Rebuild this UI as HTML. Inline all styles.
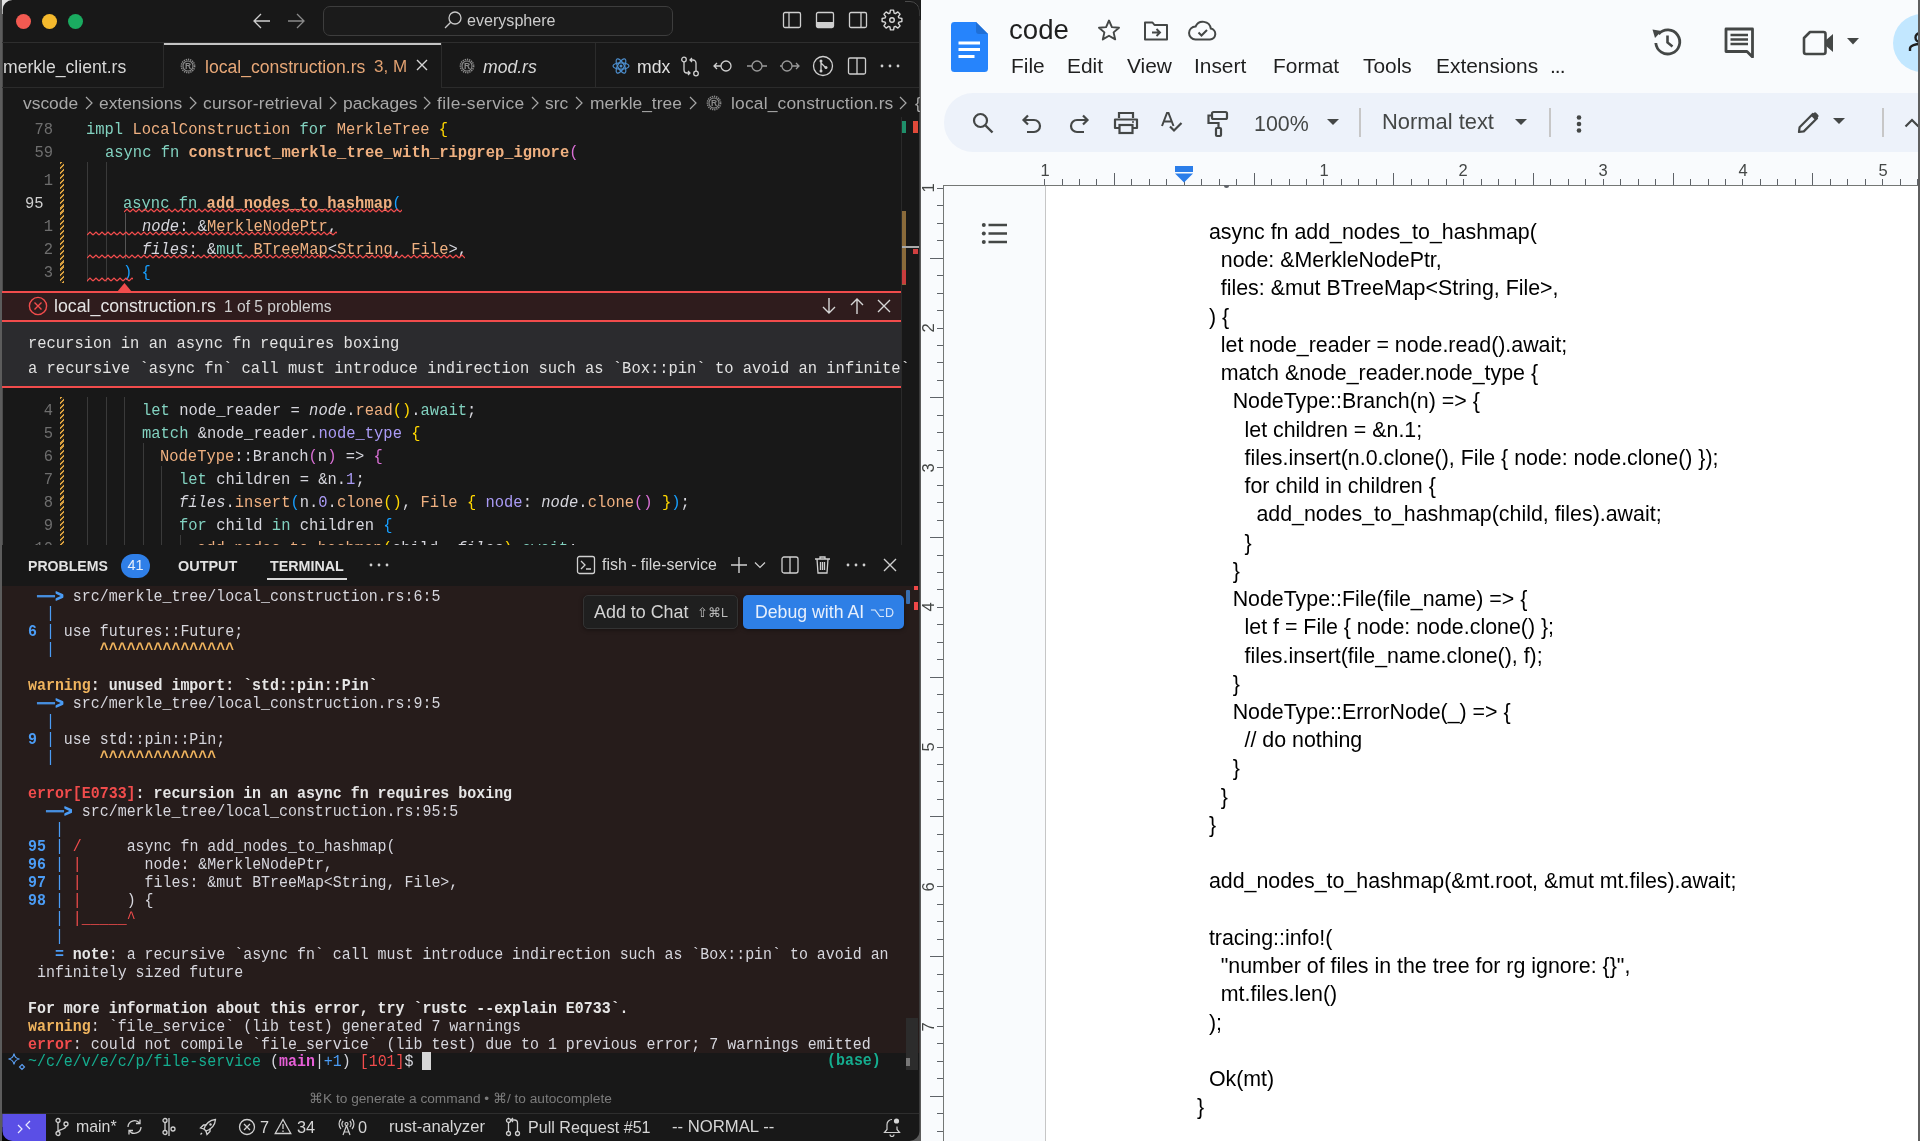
<!DOCTYPE html><html><head><meta charset='utf-8'><style>
*{box-sizing:border-box}
html,body{margin:0;padding:0}
body{width:1920px;height:1141px;position:relative;overflow:hidden;background:#f9fbfd;font-family:"Liberation Sans",sans-serif}
.a{position:absolute;will-change:transform}
.pre{white-space:pre}
.m{font-family:"Liberation Mono",monospace}
.s{font-family:"Liberation Sans",sans-serif}
</style></head><body><div class="a" style="left:0;top:0;width:921px;height:1141px;background:#5c5c5c"></div><div class="a" style="left:900px;top:0;width:21px;height:20px;background:#1c1c1c"></div><div class="a" style="left:2px;top:0;width:14px;height:14px;background:#e2e2e2"></div><div class="a" style="left:2px;top:1127px;width:14px;height:14px;background:#050505"></div><div id="vs" class="a" style="left:0;top:0;width:919.5px;height:1141px;background:#181818;clip-path:inset(0 0 0 2.5px round 10px);overflow:hidden"><div class="a" style="left:918.5px;top:0;width:1px;height:1141px;background:#2c2c2c"></div><div class="a" style="left:889.5px;top:0.5px;width:30px;height:30px;border:1px solid #4a4a4a;border-radius:10px;clip-path:inset(0 0 15px 15px)"></div><div class="a" style="left:16.3px;top:13.8px;width:15.4px;height:15.4px;border-radius:50%;background:#f25a51"></div><div class="a" style="left:41.8px;top:13.8px;width:15.4px;height:15.4px;border-radius:50%;background:#f4b92d"></div><div class="a" style="left:67.6px;top:13.8px;width:15.4px;height:15.4px;border-radius:50%;background:#1aab60"></div><svg class="a" style="left:252px;top:12px" width="20" height="18" viewBox="0 0 20 18"><path d="M18 9H3M9 2L2 9l7 7" fill="none" stroke="#cfcfcf" stroke-width="1.3"/></svg><svg class="a" style="left:286px;top:12px" width="20" height="18" viewBox="0 0 20 18"><path d="M2 9h15M11 2l7 7-7 7" fill="none" stroke="#8a8a8a" stroke-width="1.3"/></svg><div class="a" style="left:322.5px;top:5.5px;width:350px;height:30px;border:1px solid #3d3d3d;border-radius:7px;background:#1b1b1b"></div><svg class="a" style="left:443px;top:10px" width="20" height="20" viewBox="0 0 20 20"><circle cx="12" cy="8" r="6" fill="none" stroke="#c8c8c8" stroke-width="1.3"/><path d="M7.7 12.3L2 18" stroke="#c8c8c8" stroke-width="1.3"/></svg><div class="a pre s" style="left:467px;top:9px;font-size:16.1px;line-height:22px;color:#cccccc">everysphere</div><svg class="a" style="left:782px;top:10px" width="20" height="20" viewBox="0 0 20 20"><rect x="1.5" y="2.5" width="17" height="15" rx="1.5" fill="none" stroke="#cfcfcf" stroke-width="1.3"/><path d="M7 2.5v15" stroke="#cfcfcf" stroke-width="1.3"/></svg><svg class="a" style="left:815px;top:10px" width="20" height="20" viewBox="0 0 20 20"><rect x="1.5" y="2.5" width="17" height="15" rx="1.5" fill="none" stroke="#cfcfcf" stroke-width="1.3"/><rect x="2" y="12" width="16" height="5" fill="#cfcfcf"/></svg><svg class="a" style="left:848px;top:10px" width="20" height="20" viewBox="0 0 20 20"><rect x="1.5" y="2.5" width="17" height="15" rx="1.5" fill="none" stroke="#cfcfcf" stroke-width="1.3"/><path d="M13 2.5v15" stroke="#cfcfcf" stroke-width="1.3"/></svg><svg class="a" style="left:881px;top:9px" width="22" height="22" viewBox="0 0 22 22"><polygon points="8.89,4.11 9.44,1.12 12.56,1.12 13.11,4.11 14.38,4.64 16.88,2.91 19.09,5.12 17.36,7.62 17.89,8.89 20.88,9.44 20.88,12.56 17.89,13.11 17.36,14.38 19.09,16.88 16.88,19.09 14.38,17.36 13.11,17.89 12.56,20.88 9.44,20.88 8.89,17.89 7.62,17.36 5.12,19.09 2.91,16.88 4.64,14.38 4.11,13.11 1.12,12.56 1.12,9.44 4.11,8.89 4.64,7.62 2.91,5.12 5.12,2.91 7.62,4.64" fill="none" stroke="#d6d6d6" stroke-width="1.4" stroke-linejoin="round"/><circle cx="11" cy="11" r="2.3" fill="none" stroke="#d6d6d6" stroke-width="1.4"/></svg><div class="a" style="left:0;top:42px;width:919px;height:1px;background:#2e2e2e"></div><div class="a" style="left:0;top:87px;width:919px;height:1px;background:#2b2b2b"></div><div class="a" style="left:163px;top:43px;width:1px;height:44px;background:#2b2b2b"></div><div class="a pre s" style="left:3px;top:55px;font-size:17.6px;line-height:24px;color:#d8d8d8">merkle_client.rs</div><div class="a" style="left:164px;top:43px;width:277px;height:45px;background:#181818"></div><div class="a" style="left:164px;top:43px;width:277px;height:2px;background:#c4c4c4"></div><svg class="a" style="left:180px;top:58px" width="16" height="16" viewBox="0 0 16 16"><circle cx="8" cy="8" r="6.6" fill="none" stroke="#8c8c8c" stroke-width="1.6" stroke-dasharray="1.3 0.9"/><circle cx="8" cy="8" r="5" fill="none" stroke="#8c8c8c" stroke-width="1.1"/><text x="8" y="11.2" text-anchor="middle" font-family="Liberation Sans" font-weight="bold" font-size="8.5" fill="#8c8c8c">R</text></svg><div class="a pre s" style="left:205px;top:55px;font-size:17.6px;line-height:24px;color:#e8a878">local_construction.rs</div><div class="a pre s" style="left:374px;top:55px;font-size:17px;line-height:24px;color:#e0a070">3, M</div><svg class="a" style="left:415px;top:58px" width="14" height="14" viewBox="0 0 14 14"><path d="M2 2l10 10M12 2L2 12" stroke="#d6d6d6" stroke-width="1.4"/></svg><div class="a" style="left:441px;top:43px;width:1px;height:44px;background:#2b2b2b"></div><svg class="a" style="left:459px;top:58px" width="16" height="16" viewBox="0 0 16 16"><circle cx="8" cy="8" r="6.6" fill="none" stroke="#8c8c8c" stroke-width="1.6" stroke-dasharray="1.3 0.9"/><circle cx="8" cy="8" r="5" fill="none" stroke="#8c8c8c" stroke-width="1.1"/><text x="8" y="11.2" text-anchor="middle" font-family="Liberation Sans" font-weight="bold" font-size="8.5" fill="#8c8c8c">R</text></svg><div class="a pre s" style="left:483px;top:55px;font-size:17.6px;line-height:24px;color:#d8d8d8;font-style:italic">mod.rs</div><div class="a" style="left:595px;top:43px;width:1px;height:44px;background:#2b2b2b"></div><svg class="a" style="left:612px;top:57px" width="18" height="18" viewBox="0 0 18 18"><g fill="none" stroke="#4d8fcf" stroke-width="1.2"><ellipse cx="9" cy="9" rx="8" ry="3.2"/><ellipse cx="9" cy="9" rx="8" ry="3.2" transform="rotate(60 9 9)"/><ellipse cx="9" cy="9" rx="8" ry="3.2" transform="rotate(120 9 9)"/></g><circle cx="9" cy="9" r="1.5" fill="#4d8fcf"/></svg><div class="a pre s" style="left:637px;top:55px;font-size:17.6px;line-height:24px;color:#e0e0e0">mdx</div><svg class="a" style="left:680px;top:56px" width="20" height="21" viewBox="0 0 20 21"><g fill="none" stroke="#cfcfcf" stroke-width="1.3"><circle cx="4" cy="3.5" r="2.3"/><circle cx="16" cy="17.5" r="2.3"/><path d="M4 5.8V14a3 3 0 0 0 3 3h3M8 15l2 2-2 2"/><path d="M16 15.2V7a3 3 0 0 0-3-3h-3M12 2l-2 2 2 2"/></g></svg><svg class="a" style="left:712px;top:56px" width="22" height="20" viewBox="0 0 22 20"><g fill="none" stroke="#cfcfcf" stroke-width="1.3"><circle cx="14" cy="10" r="5"/><path d="M9 10H2M5 7l-3 3 3 3"/></g></svg><svg class="a" style="left:746px;top:56px" width="22" height="20" viewBox="0 0 22 20"><g fill="none" stroke="#9a9a9a" stroke-width="1.3"><circle cx="11" cy="10" r="5"/><path d="M6 10H1M16 10h5"/></g></svg><svg class="a" style="left:779px;top:56px" width="22" height="20" viewBox="0 0 22 20"><g fill="none" stroke="#9a9a9a" stroke-width="1.3"><circle cx="8" cy="10" r="5"/><path d="M13 10h7M17 7l3 3-3 3M3 10H1"/></g></svg><svg class="a" style="left:812px;top:55px" width="22" height="22" viewBox="0 0 22 22"><g fill="none" stroke="#cfcfcf" stroke-width="1.3"><circle cx="11" cy="11" r="9.5"/><path d="M9 5v12M9 8l5 5"/></g><circle cx="9" cy="6" r="1.5" fill="#cfcfcf"/><circle cx="9" cy="16" r="1.5" fill="#cfcfcf"/><circle cx="14" cy="12.5" r="1.5" fill="#cfcfcf"/></svg><svg class="a" style="left:847px;top:56px" width="20" height="20" viewBox="0 0 20 20"><g fill="none" stroke="#cfcfcf" stroke-width="1.3"><rect x="1.5" y="2" width="17" height="16" rx="1.5"/><path d="M10 2v16"/></g></svg><svg class="a" style="left:879px;top:62px" width="22" height="8" viewBox="0 0 22 8"><circle cx="3" cy="4" r="1.4" fill="#cfcfcf"/><circle cx="11" cy="4" r="1.4" fill="#cfcfcf"/><circle cx="19" cy="4" r="1.4" fill="#cfcfcf"/></svg><div class="a pre s" style="left:23px;top:91px;font-size:17.4px;line-height:24px;letter-spacing:0px;color:#a8a8a8">vscode</div><div class="a pre s" style="left:99px;top:91px;font-size:17.4px;line-height:24px;letter-spacing:0px;color:#a8a8a8">extensions</div><div class="a pre s" style="left:203.3px;top:91px;font-size:17.4px;line-height:24px;letter-spacing:0.22px;color:#a8a8a8">cursor-retrieval</div><div class="a pre s" style="left:343px;top:91px;font-size:17.4px;line-height:24px;letter-spacing:0px;color:#a8a8a8">packages</div><div class="a pre s" style="left:437px;top:91px;font-size:17.4px;line-height:24px;letter-spacing:0.37px;color:#a8a8a8">file-service</div><div class="a pre s" style="left:545px;top:91px;font-size:17.4px;line-height:24px;letter-spacing:0px;color:#a8a8a8">src</div><div class="a pre s" style="left:589.6px;top:91px;font-size:17.4px;line-height:24px;letter-spacing:0px;color:#a8a8a8">merkle_tree</div><div class="a pre s" style="left:730.6px;top:91px;font-size:17.4px;line-height:24px;letter-spacing:0.19px;color:#a8a8a8">local_construction.rs</div><svg class="a" style="left:85px;top:96px" width="8" height="14" viewBox="0 0 8 14"><path d="M1 1l6 6-6 6" fill="none" stroke="#a8a8a8" stroke-width="1.2"/></svg><svg class="a" style="left:189px;top:96px" width="8" height="14" viewBox="0 0 8 14"><path d="M1 1l6 6-6 6" fill="none" stroke="#a8a8a8" stroke-width="1.2"/></svg><svg class="a" style="left:329px;top:96px" width="8" height="14" viewBox="0 0 8 14"><path d="M1 1l6 6-6 6" fill="none" stroke="#a8a8a8" stroke-width="1.2"/></svg><svg class="a" style="left:423px;top:96px" width="8" height="14" viewBox="0 0 8 14"><path d="M1 1l6 6-6 6" fill="none" stroke="#a8a8a8" stroke-width="1.2"/></svg><svg class="a" style="left:530.7px;top:96px" width="8" height="14" viewBox="0 0 8 14"><path d="M1 1l6 6-6 6" fill="none" stroke="#a8a8a8" stroke-width="1.2"/></svg><svg class="a" style="left:575px;top:96px" width="8" height="14" viewBox="0 0 8 14"><path d="M1 1l6 6-6 6" fill="none" stroke="#a8a8a8" stroke-width="1.2"/></svg><svg class="a" style="left:688.5px;top:96px" width="8" height="14" viewBox="0 0 8 14"><path d="M1 1l6 6-6 6" fill="none" stroke="#a8a8a8" stroke-width="1.2"/></svg><svg class="a" style="left:898.5px;top:96px" width="8" height="14" viewBox="0 0 8 14"><path d="M1 1l6 6-6 6" fill="none" stroke="#a8a8a8" stroke-width="1.2"/></svg><svg class="a" style="left:706px;top:95px" width="16" height="16" viewBox="0 0 16 16"><circle cx="8" cy="8" r="6.6" fill="none" stroke="#8a8a8a" stroke-width="1.6" stroke-dasharray="1.3 0.9"/><circle cx="8" cy="8" r="5" fill="none" stroke="#8a8a8a" stroke-width="1.1"/><text x="8" y="11.2" text-anchor="middle" font-family="Liberation Sans" font-weight="bold" font-size="8.5" fill="#8a8a8a">R</text></svg><div class="a pre s" style="left:915px;top:91px;font-size:17.4px;line-height:24px;color:#a8a8a8">{</div><div class="a pre m" style="transform-origin:0 15px;transform:translateY(1px) scaleY(1.08);left:0;top:116px;width:53px;text-align:right;margin-top:2px;font-size:15.47px;line-height:23px;color:#6e6e6e">78</div><div class="a pre m" style="transform-origin:0 15px;transform:translateY(1px) scaleY(1.08);left:86.00px;top:118px;font-size:15.47px;line-height:23px;color:#d6d6dd"><span style="color:#82d2c0">impl</span><span style="color:#d6d6dd"> </span><span style="color:#efb080">LocalConstruction</span><span style="color:#d6d6dd"> </span><span style="color:#82d2c0">for</span><span style="color:#d6d6dd"> </span><span style="color:#efb080">MerkleTree</span><span style="color:#d6d6dd"> </span><span style="color:#ffd700">{</span></div><div class="a pre m" style="transform-origin:0 15px;transform:translateY(1px) scaleY(1.08);left:0;top:139px;width:53px;text-align:right;margin-top:2px;font-size:15.47px;line-height:23px;color:#6e6e6e">59</div><div class="a pre m" style="transform-origin:0 15px;transform:translateY(1px) scaleY(1.08);left:104.56px;top:141px;font-size:15.47px;line-height:23px;color:#d6d6dd"><span style="color:#82d2c0">async</span><span style="color:#d6d6dd"> </span><span style="color:#82d2c0">fn</span><span style="color:#d6d6dd"> </span><span style="color:#efb080;font-weight:bold">construct_merkle_tree_with_ripgrep_ignore</span><span style="color:#da70d6">(</span></div><div class="a pre m" style="transform-origin:0 15px;transform:translateY(1px) scaleY(1.08);left:0;top:167px;width:53px;text-align:right;margin-top:2px;font-size:15.47px;line-height:23px;color:#6e6e6e">1</div><div class="a pre m" style="transform-origin:0 15px;transform:translateY(1px) scaleY(1.08);left:25px;top:192px;font-size:15.47px;line-height:23px;color:#cfcfcf">95</div><div class="a pre m" style="transform-origin:0 15px;transform:translateY(1px) scaleY(1.08);left:123.12px;top:192px;font-size:15.47px;line-height:23px;color:#d6d6dd"><span style="color:#82d2c0">async</span><span style="color:#d6d6dd"> </span><span style="color:#82d2c0">fn</span><span style="color:#d6d6dd"> </span><span style="color:#efb080;font-weight:bold">add_nodes_to_hashmap</span><span style="color:#179fff">(</span></div><div class="a pre m" style="transform-origin:0 15px;transform:translateY(1px) scaleY(1.08);left:0;top:213px;width:53px;text-align:right;margin-top:2px;font-size:15.47px;line-height:23px;color:#6e6e6e">1</div><div class="a pre m" style="transform-origin:0 15px;transform:translateY(1px) scaleY(1.08);left:141.68px;top:215px;font-size:15.47px;line-height:23px;color:#d6d6dd"><span style="color:#d6d6dd;font-style:italic">node</span><span style="color:#d6d6dd">: &amp;</span><span style="color:#efb080">MerkleNodePtr</span><span style="color:#d6d6dd">,</span></div><div class="a pre m" style="transform-origin:0 15px;transform:translateY(1px) scaleY(1.08);left:0;top:236px;width:53px;text-align:right;margin-top:2px;font-size:15.47px;line-height:23px;color:#6e6e6e">2</div><div class="a pre m" style="transform-origin:0 15px;transform:translateY(1px) scaleY(1.08);left:141.68px;top:238px;font-size:15.47px;line-height:23px;color:#d6d6dd"><span style="color:#d6d6dd;font-style:italic">files</span><span style="color:#d6d6dd">: &amp;</span><span style="color:#82d2c0">mut</span><span style="color:#d6d6dd"> </span><span style="color:#efb080">BTreeMap</span><span style="color:#d6d6dd">&lt;</span><span style="color:#efb080">String</span><span style="color:#d6d6dd">, </span><span style="color:#efb080">File</span><span style="color:#d6d6dd">&gt;,</span></div><div class="a pre m" style="transform-origin:0 15px;transform:translateY(1px) scaleY(1.08);left:0;top:259px;width:53px;text-align:right;margin-top:2px;font-size:15.47px;line-height:23px;color:#6e6e6e">3</div><div class="a pre m" style="transform-origin:0 15px;transform:translateY(1px) scaleY(1.08);left:123.12px;top:261px;font-size:15.47px;line-height:23px;color:#d6d6dd"><span style="color:#179fff">)</span><span style="color:#d6d6dd"> </span><span style="color:#179fff">{</span></div><div class="a pre m" style="transform-origin:0 15px;transform:translateY(1px) scaleY(1.08);left:0;top:397px;width:53px;text-align:right;margin-top:2px;font-size:15.47px;line-height:23px;color:#6e6e6e">4</div><div class="a pre m" style="transform-origin:0 15px;transform:translateY(1px) scaleY(1.08);left:141.68px;top:399px;font-size:15.47px;line-height:23px;color:#d6d6dd"><span style="color:#82d2c0">let</span><span style="color:#d6d6dd"> node_reader = </span><span style="color:#d6d6dd;font-style:italic">node</span><span style="color:#d6d6dd">.</span><span style="color:#efb080">read</span><span style="color:#ffd700">()</span><span style="color:#d6d6dd">.</span><span style="color:#82d2c0">await</span><span style="color:#d6d6dd">;</span></div><div class="a pre m" style="transform-origin:0 15px;transform:translateY(1px) scaleY(1.08);left:0;top:420px;width:53px;text-align:right;margin-top:2px;font-size:15.47px;line-height:23px;color:#6e6e6e">5</div><div class="a pre m" style="transform-origin:0 15px;transform:translateY(1px) scaleY(1.08);left:141.68px;top:422px;font-size:15.47px;line-height:23px;color:#d6d6dd"><span style="color:#82d2c0">match</span><span style="color:#d6d6dd"> &amp;node_reader.</span><span style="color:#aa9bf5">node_type</span><span style="color:#d6d6dd"> </span><span style="color:#ffd700">{</span></div><div class="a pre m" style="transform-origin:0 15px;transform:translateY(1px) scaleY(1.08);left:0;top:443px;width:53px;text-align:right;margin-top:2px;font-size:15.47px;line-height:23px;color:#6e6e6e">6</div><div class="a pre m" style="transform-origin:0 15px;transform:translateY(1px) scaleY(1.08);left:160.24px;top:445px;font-size:15.47px;line-height:23px;color:#d6d6dd"><span style="color:#efb080">NodeType</span><span style="color:#d6d6dd">::Branch</span><span style="color:#da70d6">(</span><span style="color:#d6d6dd">n</span><span style="color:#da70d6">)</span><span style="color:#d6d6dd"> =&gt; </span><span style="color:#da70d6">{</span></div><div class="a pre m" style="transform-origin:0 15px;transform:translateY(1px) scaleY(1.08);left:0;top:466px;width:53px;text-align:right;margin-top:2px;font-size:15.47px;line-height:23px;color:#6e6e6e">7</div><div class="a pre m" style="transform-origin:0 15px;transform:translateY(1px) scaleY(1.08);left:178.80px;top:468px;font-size:15.47px;line-height:23px;color:#d6d6dd"><span style="color:#82d2c0">let</span><span style="color:#d6d6dd"> children = &amp;n.</span><span style="color:#aa9bf5">1</span><span style="color:#d6d6dd">;</span></div><div class="a pre m" style="transform-origin:0 15px;transform:translateY(1px) scaleY(1.08);left:0;top:489px;width:53px;text-align:right;margin-top:2px;font-size:15.47px;line-height:23px;color:#6e6e6e">8</div><div class="a pre m" style="transform-origin:0 15px;transform:translateY(1px) scaleY(1.08);left:178.80px;top:491px;font-size:15.47px;line-height:23px;color:#d6d6dd"><span style="color:#d6d6dd;font-style:italic">files</span><span style="color:#d6d6dd">.</span><span style="color:#efb080">insert</span><span style="color:#179fff">(</span><span style="color:#d6d6dd">n.</span><span style="color:#aa9bf5">0</span><span style="color:#d6d6dd">.</span><span style="color:#efb080">clone</span><span style="color:#ffd700">()</span><span style="color:#d6d6dd">, </span><span style="color:#efb080">File</span><span style="color:#d6d6dd"> </span><span style="color:#ffd700">{</span><span style="color:#d6d6dd"> </span><span style="color:#aa9bf5">node</span><span style="color:#d6d6dd">: </span><span style="color:#d6d6dd;font-style:italic">node</span><span style="color:#d6d6dd">.</span><span style="color:#efb080">clone</span><span style="color:#da70d6">()</span><span style="color:#d6d6dd"> </span><span style="color:#ffd700">}</span><span style="color:#179fff">)</span><span style="color:#d6d6dd">;</span></div><div class="a pre m" style="transform-origin:0 15px;transform:translateY(1px) scaleY(1.08);left:0;top:512px;width:53px;text-align:right;margin-top:2px;font-size:15.47px;line-height:23px;color:#6e6e6e">9</div><div class="a pre m" style="transform-origin:0 15px;transform:translateY(1px) scaleY(1.08);left:178.80px;top:514px;font-size:15.47px;line-height:23px;color:#d6d6dd"><span style="color:#82d2c0">for</span><span style="color:#d6d6dd"> child </span><span style="color:#82d2c0">in</span><span style="color:#d6d6dd"> children </span><span style="color:#179fff">{</span></div><div class="a pre m" style="transform-origin:0 15px;transform:translateY(1px) scaleY(1.08);left:0;top:535px;width:53px;text-align:right;margin-top:2px;font-size:15.47px;line-height:23px;color:#6e6e6e">10</div><div class="a pre m" style="transform-origin:0 15px;transform:translateY(1px) scaleY(1.08);left:197.36px;top:537px;font-size:15.47px;line-height:23px;color:#d6d6dd"><span style="color:#efb080">add_nodes_to_hashmap</span><span style="color:#ffd700">(</span><span style="color:#d6d6dd">child, </span><span style="color:#d6d6dd;font-style:italic">files</span><span style="color:#ffd700">)</span><span style="color:#d6d6dd">.</span><span style="color:#82d2c0">await</span><span style="color:#d6d6dd">;</span></div><div class="a" style="left:87.0px;top:162px;width:1px;height:120px;background:#3a3a3a"></div><div class="a" style="left:105.6px;top:162px;width:1px;height:120px;background:#3a3a3a"></div><div class="a" style="left:124.5px;top:213px;width:1px;height:46px;background:#555"></div><div class="a" style="left:87.0px;top:397px;width:1px;height:148px;background:#3a3a3a"></div><div class="a" style="left:105.6px;top:397px;width:1px;height:148px;background:#3a3a3a"></div><div class="a" style="left:124.1px;top:397px;width:1px;height:148px;background:#3a3a3a"></div><div class="a" style="left:142.7px;top:443px;width:1px;height:102px;background:#3a3a3a"></div><div class="a" style="left:161.2px;top:466px;width:1px;height:79px;background:#3a3a3a"></div><div class="a" style="left:179.8px;top:535px;width:1px;height:10px;background:#3a3a3a"></div><div class="a" style="left:60px;top:162px;width:4px;height:121px;background:repeating-linear-gradient(135deg,#d9a040 0 1.6px,#2a2418 1.6px 3.6px)"></div><div class="a" style="left:60px;top:397px;width:4px;height:148px;background:repeating-linear-gradient(135deg,#d9a040 0 1.6px,#2a2418 1.6px 3.6px)"></div><svg class="a" style="left:124px;top:208px" width="278" height="5" viewBox="0 0 278 5"><path d="M0,4 l3,-3 l3,3 M6,4 l3,-3 l3,3 M12,4 l3,-3 l3,3 M18,4 l3,-3 l3,3 M24,4 l3,-3 l3,3 M30,4 l3,-3 l3,3 M36,4 l3,-3 l3,3 M42,4 l3,-3 l3,3 M48,4 l3,-3 l3,3 M54,4 l3,-3 l3,3 M60,4 l3,-3 l3,3 M66,4 l3,-3 l3,3 M72,4 l3,-3 l3,3 M78,4 l3,-3 l3,3 M84,4 l3,-3 l3,3 M90,4 l3,-3 l3,3 M96,4 l3,-3 l3,3 M102,4 l3,-3 l3,3 M108,4 l3,-3 l3,3 M114,4 l3,-3 l3,3 M120,4 l3,-3 l3,3 M126,4 l3,-3 l3,3 M132,4 l3,-3 l3,3 M138,4 l3,-3 l3,3 M144,4 l3,-3 l3,3 M150,4 l3,-3 l3,3 M156,4 l3,-3 l3,3 M162,4 l3,-3 l3,3 M168,4 l3,-3 l3,3 M174,4 l3,-3 l3,3 M180,4 l3,-3 l3,3 M186,4 l3,-3 l3,3 M192,4 l3,-3 l3,3 M198,4 l3,-3 l3,3 M204,4 l3,-3 l3,3 M210,4 l3,-3 l3,3 M216,4 l3,-3 l3,3 M222,4 l3,-3 l3,3 M228,4 l3,-3 l3,3 M234,4 l3,-3 l3,3 M240,4 l3,-3 l3,3 M246,4 l3,-3 l3,3 M252,4 l3,-3 l3,3 M258,4 l3,-3 l3,3 M264,4 l3,-3 l3,3 M270,4 l3,-3 l3,3 M276,4 l3,-3 l3,3 " fill="none" stroke="#f14c4c" stroke-width="1.2"/></svg><svg class="a" style="left:87px;top:231px" width="250" height="5" viewBox="0 0 250 5"><path d="M0,4 l3,-3 l3,3 M6,4 l3,-3 l3,3 M12,4 l3,-3 l3,3 M18,4 l3,-3 l3,3 M24,4 l3,-3 l3,3 M30,4 l3,-3 l3,3 M36,4 l3,-3 l3,3 M42,4 l3,-3 l3,3 M48,4 l3,-3 l3,3 M54,4 l3,-3 l3,3 M60,4 l3,-3 l3,3 M66,4 l3,-3 l3,3 M72,4 l3,-3 l3,3 M78,4 l3,-3 l3,3 M84,4 l3,-3 l3,3 M90,4 l3,-3 l3,3 M96,4 l3,-3 l3,3 M102,4 l3,-3 l3,3 M108,4 l3,-3 l3,3 M114,4 l3,-3 l3,3 M120,4 l3,-3 l3,3 M126,4 l3,-3 l3,3 M132,4 l3,-3 l3,3 M138,4 l3,-3 l3,3 M144,4 l3,-3 l3,3 M150,4 l3,-3 l3,3 M156,4 l3,-3 l3,3 M162,4 l3,-3 l3,3 M168,4 l3,-3 l3,3 M174,4 l3,-3 l3,3 M180,4 l3,-3 l3,3 M186,4 l3,-3 l3,3 M192,4 l3,-3 l3,3 M198,4 l3,-3 l3,3 M204,4 l3,-3 l3,3 M210,4 l3,-3 l3,3 M216,4 l3,-3 l3,3 M222,4 l3,-3 l3,3 M228,4 l3,-3 l3,3 M234,4 l3,-3 l3,3 M240,4 l3,-3 l3,3 M246,4 l3,-3 l3,3 " fill="none" stroke="#f14c4c" stroke-width="1.2"/></svg><svg class="a" style="left:87px;top:254px" width="378" height="5" viewBox="0 0 378 5"><path d="M0,4 l3,-3 l3,3 M6,4 l3,-3 l3,3 M12,4 l3,-3 l3,3 M18,4 l3,-3 l3,3 M24,4 l3,-3 l3,3 M30,4 l3,-3 l3,3 M36,4 l3,-3 l3,3 M42,4 l3,-3 l3,3 M48,4 l3,-3 l3,3 M54,4 l3,-3 l3,3 M60,4 l3,-3 l3,3 M66,4 l3,-3 l3,3 M72,4 l3,-3 l3,3 M78,4 l3,-3 l3,3 M84,4 l3,-3 l3,3 M90,4 l3,-3 l3,3 M96,4 l3,-3 l3,3 M102,4 l3,-3 l3,3 M108,4 l3,-3 l3,3 M114,4 l3,-3 l3,3 M120,4 l3,-3 l3,3 M126,4 l3,-3 l3,3 M132,4 l3,-3 l3,3 M138,4 l3,-3 l3,3 M144,4 l3,-3 l3,3 M150,4 l3,-3 l3,3 M156,4 l3,-3 l3,3 M162,4 l3,-3 l3,3 M168,4 l3,-3 l3,3 M174,4 l3,-3 l3,3 M180,4 l3,-3 l3,3 M186,4 l3,-3 l3,3 M192,4 l3,-3 l3,3 M198,4 l3,-3 l3,3 M204,4 l3,-3 l3,3 M210,4 l3,-3 l3,3 M216,4 l3,-3 l3,3 M222,4 l3,-3 l3,3 M228,4 l3,-3 l3,3 M234,4 l3,-3 l3,3 M240,4 l3,-3 l3,3 M246,4 l3,-3 l3,3 M252,4 l3,-3 l3,3 M258,4 l3,-3 l3,3 M264,4 l3,-3 l3,3 M270,4 l3,-3 l3,3 M276,4 l3,-3 l3,3 M282,4 l3,-3 l3,3 M288,4 l3,-3 l3,3 M294,4 l3,-3 l3,3 M300,4 l3,-3 l3,3 M306,4 l3,-3 l3,3 M312,4 l3,-3 l3,3 M318,4 l3,-3 l3,3 M324,4 l3,-3 l3,3 M330,4 l3,-3 l3,3 M336,4 l3,-3 l3,3 M342,4 l3,-3 l3,3 M348,4 l3,-3 l3,3 M354,4 l3,-3 l3,3 M360,4 l3,-3 l3,3 M366,4 l3,-3 l3,3 M372,4 l3,-3 l3,3 M378,4 l3,-3 l3,3 " fill="none" stroke="#f14c4c" stroke-width="1.2"/></svg><svg class="a" style="left:87px;top:277px" width="46" height="5" viewBox="0 0 46 5"><path d="M0,4 l3,-3 l3,3 M6,4 l3,-3 l3,3 M12,4 l3,-3 l3,3 M18,4 l3,-3 l3,3 M24,4 l3,-3 l3,3 M30,4 l3,-3 l3,3 M36,4 l3,-3 l3,3 M42,4 l3,-3 l3,3 " fill="none" stroke="#f14c4c" stroke-width="1.2"/></svg><svg class="a" style="left:117px;top:283px" width="15" height="9" viewBox="0 0 15 9"><path d="M0 9L7.5 0L15 9z" fill="#f14c4c"/></svg><div class="a" style="left:2px;top:291px;width:899px;height:2px;background:#f14c4c"></div><div class="a" style="left:2px;top:293px;width:899px;height:27px;background:#2f1c1d"></div><div class="a" style="left:2px;top:320px;width:899px;height:2px;background:#f14c4c"></div><div class="a" style="left:2px;top:322px;width:899px;height:64px;background:#2b2b2e"></div><div class="a" style="left:2px;top:386px;width:899px;height:2px;background:#f14c4c"></div><svg class="a" style="left:28px;top:296px" width="20" height="20" viewBox="0 0 20 20"><circle cx="10" cy="10" r="8.6" fill="none" stroke="#f14c4c" stroke-width="1.4"/><path d="M6.5 6.5l7 7M13.5 6.5l-7 7" stroke="#f14c4c" stroke-width="1.4"/></svg><div class="a pre s" style="left:53.5px;top:295px;font-size:17.75px;line-height:22px;color:#e4e4e4">local_construction.rs</div><div class="a pre s" style="left:224px;top:296px;font-size:15.6px;line-height:22px;color:#cfcfcf">1 of 5 problems</div><svg class="a" style="left:820px;top:296px" width="18" height="20" viewBox="0 0 18 20"><path d="M9 2v15M3 11l6 6 6-6" fill="none" stroke="#d6d6d6" stroke-width="1.4"/></svg><svg class="a" style="left:848px;top:296px" width="18" height="20" viewBox="0 0 18 20"><path d="M9 18V3M3 9l6-6 6 6" fill="none" stroke="#d6d6d6" stroke-width="1.4"/></svg><svg class="a" style="left:876px;top:298px" width="16" height="16" viewBox="0 0 16 16"><path d="M2 2l12 12M14 2L2 14" stroke="#d6d6d6" stroke-width="1.4"/></svg><div class="a pre m" style="transform-origin:0 15px;transform:translateY(1px) scaleY(1.08);left:28px;top:332px;font-size:15.47px;line-height:23px;color:#e2e2e2">recursion in an async fn requires boxing
a recursive `async fn` call must introduce indirection such as `Box::pin` to avoid an infinite`</div><div class="a" style="left:901px;top:117px;width:1px;height:428px;background:#2a2a2a"></div><div class="a" style="left:902px;top:121px;width:4px;height:12px;background:#1f8f6a"></div><div class="a" style="left:913px;top:121px;width:5px;height:12px;background:#e04a3a"></div><div class="a" style="left:902px;top:211px;width:4px;height:74px;background:#8a6a3a"></div><div class="a" style="left:902px;top:246px;width:17px;height:2px;background:#aaaaaa"></div><div class="a" style="left:913px;top:249px;width:5px;height:5px;background:#d04040"></div><div class="a" style="left:902px;top:270px;width:4px;height:14px;background:#c83c3c"></div><div class="a" style="left:0;top:545px;width:919px;height:41px;background:#181818"></div><div class="a pre s" style="left:28px;top:556px;font-size:14.1px;line-height:20px;font-weight:bold;color:#e2e2e2">PROBLEMS</div><div class="a" style="left:120.5px;top:553.5px;width:29px;height:23.5px;border-radius:12px;background:#2f7fe8"></div><div class="a pre s" style="left:120.5px;top:555px;width:29px;text-align:center;font-size:14.5px;line-height:20px;color:#e8eefa">41</div><div class="a pre s" style="left:178px;top:556px;font-size:14.45px;line-height:20px;font-weight:bold;color:#e2e2e2">OUTPUT</div><div class="a pre s" style="left:270px;top:556px;font-size:14.3px;line-height:20px;font-weight:bold;color:#e2e2e2">TERMINAL</div><div class="a" style="left:267px;top:578px;width:80px;height:2px;background:#d8d8d8"></div><svg class="a" style="left:368px;top:562px" width="22" height="6" viewBox="0 0 22 6"><circle cx="3" cy="3" r="1.4" fill="#d0d0d0"/><circle cx="11" cy="3" r="1.4" fill="#d0d0d0"/><circle cx="19" cy="3" r="1.4" fill="#d0d0d0"/></svg><svg class="a" style="left:576px;top:555px" width="20" height="20" viewBox="0 0 20 20"><g fill="none" stroke="#d0d0d0" stroke-width="1.3"><rect x="1.5" y="1.5" width="17" height="17" rx="2"/><path d="M5 6l4 4-4 4M10 14h5"/></g></svg><div class="a pre s" style="left:602px;top:554px;font-size:15.9px;line-height:22px;color:#d6d6d6">fish - file-service</div><svg class="a" style="left:730px;top:556px" width="18" height="18" viewBox="0 0 18 18"><path d="M9 1v16M1 9h16" stroke="#d0d0d0" stroke-width="1.4"/></svg><svg class="a" style="left:754px;top:561px" width="12" height="8" viewBox="0 0 12 8"><path d="M1 1.5l5 5 5-5" fill="none" stroke="#d0d0d0" stroke-width="1.2"/></svg><svg class="a" style="left:781px;top:556px" width="18" height="18" viewBox="0 0 18 18"><g fill="none" stroke="#d0d0d0" stroke-width="1.3"><rect x="1" y="1" width="16" height="16" rx="2"/><path d="M9 1v16"/></g></svg><svg class="a" style="left:814px;top:555px" width="17" height="19" viewBox="0 0 17 19"><g fill="none" stroke="#d0d0d0" stroke-width="1.3"><path d="M1 4h15M6 4V2h5v2M3 4l1 14h9l1-14M6.5 7v8M8.5 7v8M10.5 7v8"/></g></svg><svg class="a" style="left:845px;top:562px" width="22" height="6" viewBox="0 0 22 6"><circle cx="3" cy="3" r="1.4" fill="#d0d0d0"/><circle cx="11" cy="3" r="1.4" fill="#d0d0d0"/><circle cx="19" cy="3" r="1.4" fill="#d0d0d0"/></svg><svg class="a" style="left:882px;top:557px" width="16" height="16" viewBox="0 0 16 16"><path d="M2 2l12 12M14 2L2 14" stroke="#d0d0d0" stroke-width="1.4"/></svg><div class="a" style="left:0;top:586px;width:919px;height:466.5px;background:#261c1b"></div><div class="a" style="left:0;top:1052.5px;width:919px;height:60.5px;background:#181818"></div><div class="a pre m" style="transform-origin:0 12px;transform:translateY(1px) scaleY(1.1);left:28.00px;top:587.54px;font-size:14.95px;line-height:17.92px"><span style="color:#d6d6dd"> </span><span style="color:#4b9cf5;font-weight:bold;text-shadow:0 0.8px 0 #4b9cf5">──&gt;</span><span style="color:#d6d6dd"> src/merkle_tree/local_construction.rs:6:5</span></div><div class="a pre m" style="transform-origin:0 12px;transform:translateY(1px) scaleY(1.1);left:28.00px;top:605.46px;font-size:14.95px;line-height:17.92px"><span style="color:#d6d6dd">  </span><span style="color:#4b9cf5">|</span></div><div class="a pre m" style="transform-origin:0 12px;transform:translateY(1px) scaleY(1.1);left:28.00px;top:623.38px;font-size:14.95px;line-height:17.92px"><span style="color:#4b9cf5;font-weight:bold">6</span><span style="color:#d6d6dd"> </span><span style="color:#4b9cf5">|</span><span style="color:#d6d6dd"> use futures::Future;</span></div><div class="a pre m" style="transform-origin:0 12px;transform:translateY(1px) scaleY(1.1);left:28.00px;top:641.30px;font-size:14.95px;line-height:17.92px"><span style="color:#d6d6dd">  </span><span style="color:#4b9cf5">|</span><span style="color:#d6d6dd">     </span><span style="color:#f0b45e;font-weight:bold">^^^^^^^^^^^^^^^</span></div><div class="a pre m" style="transform-origin:0 12px;transform:translateY(1px) scaleY(1.1);left:28.00px;top:677.14px;font-size:14.95px;line-height:17.92px"><span style="color:#f0b45e;font-weight:bold">warning</span><span style="color:#e6e6e6;font-weight:bold">: unused import: `std::pin::Pin`</span></div><div class="a pre m" style="transform-origin:0 12px;transform:translateY(1px) scaleY(1.1);left:28.00px;top:695.06px;font-size:14.95px;line-height:17.92px"><span style="color:#d6d6dd"> </span><span style="color:#4b9cf5;font-weight:bold;text-shadow:0 0.8px 0 #4b9cf5">──&gt;</span><span style="color:#d6d6dd"> src/merkle_tree/local_construction.rs:9:5</span></div><div class="a pre m" style="transform-origin:0 12px;transform:translateY(1px) scaleY(1.1);left:28.00px;top:712.98px;font-size:14.95px;line-height:17.92px"><span style="color:#d6d6dd">  </span><span style="color:#4b9cf5">|</span></div><div class="a pre m" style="transform-origin:0 12px;transform:translateY(1px) scaleY(1.1);left:28.00px;top:730.90px;font-size:14.95px;line-height:17.92px"><span style="color:#4b9cf5;font-weight:bold">9</span><span style="color:#d6d6dd"> </span><span style="color:#4b9cf5">|</span><span style="color:#d6d6dd"> use std::pin::Pin;</span></div><div class="a pre m" style="transform-origin:0 12px;transform:translateY(1px) scaleY(1.1);left:28.00px;top:748.82px;font-size:14.95px;line-height:17.92px"><span style="color:#d6d6dd">  </span><span style="color:#4b9cf5">|</span><span style="color:#d6d6dd">     </span><span style="color:#f0b45e;font-weight:bold">^^^^^^^^^^^^^</span></div><div class="a pre m" style="transform-origin:0 12px;transform:translateY(1px) scaleY(1.1);left:28.00px;top:784.66px;font-size:14.95px;line-height:17.92px"><span style="color:#f14c4c;font-weight:bold">error[E0733]</span><span style="color:#e6e6e6;font-weight:bold">: recursion in an async fn requires boxing</span></div><div class="a pre m" style="transform-origin:0 12px;transform:translateY(1px) scaleY(1.1);left:28.00px;top:802.58px;font-size:14.95px;line-height:17.92px"><span style="color:#d6d6dd">  </span><span style="color:#4b9cf5;font-weight:bold;text-shadow:0 0.8px 0 #4b9cf5">──&gt;</span><span style="color:#d6d6dd"> src/merkle_tree/local_construction.rs:95:5</span></div><div class="a pre m" style="transform-origin:0 12px;transform:translateY(1px) scaleY(1.1);left:28.00px;top:820.50px;font-size:14.95px;line-height:17.92px"><span style="color:#d6d6dd">   </span><span style="color:#4b9cf5">|</span></div><div class="a pre m" style="transform-origin:0 12px;transform:translateY(1px) scaleY(1.1);left:28.00px;top:838.42px;font-size:14.95px;line-height:17.92px"><span style="color:#4b9cf5;font-weight:bold">95</span><span style="color:#d6d6dd"> </span><span style="color:#4b9cf5">|</span><span style="color:#d6d6dd"> </span><span style="color:#f14c4c">/</span><span style="color:#d6d6dd">     async fn add_nodes_to_hashmap(</span></div><div class="a pre m" style="transform-origin:0 12px;transform:translateY(1px) scaleY(1.1);left:28.00px;top:856.34px;font-size:14.95px;line-height:17.92px"><span style="color:#4b9cf5;font-weight:bold">96</span><span style="color:#d6d6dd"> </span><span style="color:#4b9cf5">|</span><span style="color:#d6d6dd"> </span><span style="color:#f14c4c">|</span><span style="color:#d6d6dd">       node: &amp;MerkleNodePtr,</span></div><div class="a pre m" style="transform-origin:0 12px;transform:translateY(1px) scaleY(1.1);left:28.00px;top:874.26px;font-size:14.95px;line-height:17.92px"><span style="color:#4b9cf5;font-weight:bold">97</span><span style="color:#d6d6dd"> </span><span style="color:#4b9cf5">|</span><span style="color:#d6d6dd"> </span><span style="color:#f14c4c">|</span><span style="color:#d6d6dd">       files: &amp;mut BTreeMap&lt;String, File&gt;,</span></div><div class="a pre m" style="transform-origin:0 12px;transform:translateY(1px) scaleY(1.1);left:28.00px;top:892.18px;font-size:14.95px;line-height:17.92px"><span style="color:#4b9cf5;font-weight:bold">98</span><span style="color:#d6d6dd"> </span><span style="color:#4b9cf5">|</span><span style="color:#d6d6dd"> </span><span style="color:#f14c4c">|</span><span style="color:#d6d6dd">     ) {</span></div><div class="a pre m" style="transform-origin:0 12px;transform:translateY(1px) scaleY(1.1);left:28.00px;top:910.10px;font-size:14.95px;line-height:17.92px"><span style="color:#d6d6dd">   </span><span style="color:#4b9cf5">|</span><span style="color:#d6d6dd"> </span><span style="color:#f14c4c">|_____^</span></div><div class="a pre m" style="transform-origin:0 12px;transform:translateY(1px) scaleY(1.1);left:28.00px;top:928.02px;font-size:14.95px;line-height:17.92px"><span style="color:#d6d6dd">   </span><span style="color:#4b9cf5">|</span></div><div class="a pre m" style="transform-origin:0 12px;transform:translateY(1px) scaleY(1.1);left:28.00px;top:945.94px;font-size:14.95px;line-height:17.92px"><span style="color:#d6d6dd">   </span><span style="color:#4b9cf5;font-weight:bold">=</span><span style="color:#d6d6dd"> </span><span style="color:#e6e6e6;font-weight:bold">note</span><span style="color:#d6d6dd">: a recursive `async fn` call must introduce indirection such as `Box::pin` to avoid an</span></div><div class="a pre m" style="transform-origin:0 12px;transform:translateY(1px) scaleY(1.1);left:28.00px;top:963.86px;font-size:14.95px;line-height:17.92px"><span style="color:#d6d6dd"> infinitely sized future</span></div><div class="a pre m" style="transform-origin:0 12px;transform:translateY(1px) scaleY(1.1);left:28.00px;top:999.70px;font-size:14.95px;line-height:17.92px"><span style="color:#e6e6e6;font-weight:bold">For more information about this error, try `rustc --explain E0733`.</span></div><div class="a pre m" style="transform-origin:0 12px;transform:translateY(1px) scaleY(1.1);left:28.00px;top:1017.62px;font-size:14.95px;line-height:17.92px"><span style="color:#f0b45e;font-weight:bold">warning</span><span style="color:#d6d6dd">: `file_service` (lib test) generated 7 warnings</span></div><div class="a pre m" style="transform-origin:0 12px;transform:translateY(1px) scaleY(1.1);left:28.00px;top:1035.54px;font-size:14.95px;line-height:17.92px"><span style="color:#f14c4c;font-weight:bold">error</span><span style="color:#d6d6dd">: could not compile `file_service` (lib test) due to 1 previous error; 7 warnings emitted</span></div><div class="a pre m" style="transform-origin:0 12px;transform:translateY(1px) scaleY(1.1);left:28.00px;top:1053.46px;font-size:14.95px;line-height:17.92px"><span style="color:#15ad8f">~/c/e/v/e/c/p/file-service</span><span style="color:#d6d6dd"> (</span><span style="color:#e85fd8;font-weight:bold">main</span><span style="color:#d6d6dd">|</span><span style="color:#4b9cf5">+1</span><span style="color:#d6d6dd">) </span><span style="color:#f14c4c">[101]</span><span style="color:#d6d6dd">$ </span></div><div class="a" style="left:422px;top:1052px;width:9px;height:18px;background:#d6d6d6"></div><div class="a pre m" style="transform-origin:0 12px;transform:translateY(1px) scaleY(1.1);left:827px;top:1052px;font-size:14.95px;line-height:17.92px;color:#15ad8f;font-weight:bold">(base)</div><svg class="a" style="left:7px;top:1052px" width="20" height="20" viewBox="0 0 20 20"><g fill="none" stroke="#5a9df0" stroke-width="1.2"><path d="M7 1.5C7.5 5 9 6.5 12.5 7C9 7.5 7.5 9 7 12.5C6.5 9 5 7.5 1.5 7C5 6.5 6.5 5 7 1.5z"/><path d="M15 12.5l2.5 2.5-2.5 2.5-2.5-2.5z"/></g></svg><div class="a" style="left:906px;top:1018px;width:12px;height:52px;background:#2c2c2c"></div><div class="a" style="left:906px;top:1058px;width:4px;height:8px;background:#777"></div><div class="a" style="left:906px;top:590px;width:4px;height:14px;background:#3a6fb0;border-radius:1px"></div><div class="a" style="left:914px;top:586px;width:4px;height:4px;background:#f04848"></div><div class="a" style="left:914px;top:602px;width:4px;height:8px;background:#f04848"></div><div class="a" style="left:582.5px;top:595px;width:155px;height:33.5px;border-radius:5px;background:#1f1f1f;border:1px solid #333;box-shadow:0 1px 4px rgba(0,0,0,.4)"></div><div class="a pre s" style="left:593.5px;top:600px;font-size:17.9px;line-height:24px;color:#d4d4d4">Add to Chat</div><div class="a pre s" style="left:697px;top:604px;font-size:12.5px;line-height:18px;color:#bdbdbd">⇧⌘L</div><div class="a" style="left:742.5px;top:595px;width:161px;height:33.5px;border-radius:5px;background:#2e7fe6;box-shadow:0 1px 4px rgba(0,0,0,.4)"></div><div class="a pre s" style="left:754.5px;top:600px;font-size:17.7px;line-height:24px;color:#e8f0fc">Debug with AI</div><div class="a pre s" style="left:870px;top:604px;font-size:12.5px;line-height:18px;color:#d8e6fa">⌥D</div><div class="a pre s" style="left:309px;top:1089px;font-size:13.7px;line-height:20px;color:#7c7c7c">⌘K to generate a command • ⌘/ to autocomplete</div><div class="a" style="left:0;top:1113px;width:919px;height:1px;background:#2e2e2e"></div><div class="a" style="left:2px;top:1114px;width:44px;height:27px;background:#5a4fe6"></div><svg class="a" style="left:16px;top:1119px" width="16" height="16" viewBox="0 0 16 16"><path d="M2 6l4 4-4 4M14 2l-4 4 4 4" fill="none" stroke="#e8e8ff" stroke-width="1.2"/></svg><svg class="a" style="left:54px;top:1117px" width="16" height="20" viewBox="0 0 16 20"><g fill="none" stroke="#d0d0d0" stroke-width="1.3"><circle cx="4" cy="3.5" r="2"/><circle cx="4" cy="16.5" r="2"/><circle cx="12" cy="7" r="2"/><path d="M4 5.5v9M12 9c0 4-8 3-8 5.5"/></g></svg><div class="a pre s" style="left:75.5px;top:1116px;font-size:15.9px;line-height:22px;color:#d6d6d6">main*</div><svg class="a" style="left:125px;top:1118px" width="19" height="18" viewBox="0 0 19 18"><g fill="none" stroke="#d0d0d0" stroke-width="1.3"><path d="M3 9a6.5 6.5 0 0 1 11.5-4M16 9a6.5 6.5 0 0 1-11.5 4"/><path d="M15 1.5v4h-4M4 16.5v-4h4"/></g></svg><svg class="a" style="left:161px;top:1117px" width="16" height="20" viewBox="0 0 16 20"><g fill="none" stroke="#d0d0d0" stroke-width="1.3"><circle cx="4" cy="3.5" r="2"/><circle cx="4" cy="15.5" r="2"/><circle cx="12" cy="12" r="2"/><path d="M4 5.5v8M8 1v18"/></g></svg><svg class="a" style="left:199px;top:1118px" width="18" height="18" viewBox="0 0 18 18"><g fill="none" stroke="#d0d0d0" stroke-width="1.3"><path d="M16.5 1.5C11 2 7 5 5 11l2 2c6-2 9-6 9.5-11.5z"/><path d="M5 11l-3.5-1 3-3h3M7 13l1 3.5 3-3v-3M3 15l-1.5 1.5"/></g><circle cx="11.5" cy="6.5" r="1.2" fill="#d0d0d0"/></svg><svg class="a" style="left:238px;top:1118px" width="18" height="18" viewBox="0 0 18 18"><g fill="none" stroke="#d0d0d0" stroke-width="1.3"><circle cx="9" cy="9" r="7.5"/><path d="M6 6l6 6M12 6l-6 6"/></g></svg><div class="a pre s" style="left:259.5px;top:1116px;font-size:16.3px;line-height:22px;color:#d6d6d6">7</div><svg class="a" style="left:274px;top:1118px" width="18" height="17" viewBox="0 0 18 17"><g fill="none" stroke="#d0d0d0" stroke-width="1.3"><path d="M9 1.5L16.8 15.5H1.2z"/><path d="M9 6v5M9 12.5v1.5"/></g></svg><div class="a pre s" style="left:297px;top:1116px;font-size:16.3px;line-height:22px;color:#d6d6d6">34</div><svg class="a" style="left:338px;top:1118px" width="17" height="18" viewBox="0 0 17 18"><g fill="none" stroke="#d0d0d0" stroke-width="1.2"><circle cx="8.5" cy="6" r="1.5"/><path d="M8.5 7.5L5 17M8.5 7.5l3.5 9.5M6 14h5M5.2 3a4.5 4.5 0 0 0 0 6M11.8 3a4.5 4.5 0 0 1 0 6M3 1a7.5 7.5 0 0 0 0 10M14 1a7.5 7.5 0 0 1 0 10"/></g></svg><div class="a pre s" style="left:358px;top:1116px;font-size:16.3px;line-height:22px;color:#d6d6d6">0</div><div class="a pre s" style="left:388.5px;top:1116px;font-size:16.6px;line-height:22px;color:#d6d6d6">rust-analyzer</div><svg class="a" style="left:505px;top:1117px" width="16" height="20" viewBox="0 0 16 20"><g fill="none" stroke="#d0d0d0" stroke-width="1.3"><circle cx="3.5" cy="3.5" r="2"/><circle cx="3.5" cy="16.5" r="2"/><circle cx="12.5" cy="16.5" r="2"/><path d="M3.5 5.5v9M12.5 14.5V6c0-2-1-3-3-3H6M8 1L6 3l2 2"/></g></svg><div class="a pre s" style="left:527.5px;top:1116px;font-size:16.1px;line-height:22px;color:#d6d6d6">Pull Request #51</div><div class="a pre s" style="left:671.7px;top:1116px;font-size:16.7px;line-height:22px;color:#d6d6d6">-- NORMAL --</div><svg class="a" style="left:883px;top:1117px" width="18" height="20" viewBox="0 0 18 20"><g fill="none" stroke="#d0d0d0" stroke-width="1.2"><path d="M9 2.5a5 5 0 0 0-5 5v5l-2.5 3h15L14 12.5v-3"/><path d="M7 17.5a2 2 0 0 0 4 0"/></g><circle cx="13.5" cy="4" r="2.6" fill="#d6d6d6"/></svg></div><svg class="a" style="left:951px;top:21.5px" width="37" height="50" viewBox="0 0 37 50"><path d="M3.5 0H25L37 12V46.5A3.5 3.5 0 0 1 33.5 50H3.5A3.5 3.5 0 0 1 0 46.5V3.5A3.5 3.5 0 0 1 3.5 0z" fill="#2684fc"/><path d="M25 0L37 12H28A3 3 0 0 1 25 9z" fill="#1f6fd6"/><rect x="7.5" y="19.5" width="21.5" height="3" fill="#fff"/><rect x="7.5" y="26" width="21.5" height="3" fill="#fff"/><rect x="7.5" y="33" width="16" height="3" fill="#fff"/></svg><div class="a pre s" style="left:1009px;top:13.6px;font-size:27.6px;line-height:32px;color:#1f1f1f">code</div><svg class="a" style="left:1097px;top:18px" width="24" height="24" viewBox="0 0 24 24"><path d="M12 2.5l2.9 6.6 7.1.6-5.4 4.7 1.6 7-6.2-3.7-6.2 3.7 1.6-7L2 9.7l7.1-.6z" fill="none" stroke="#444746" stroke-width="1.9" stroke-linejoin="round"/></svg><svg class="a" style="left:1143px;top:20px" width="26" height="22" viewBox="0 0 26 22"><path d="M2 2.5h7.5l2 2.5H24V19.5H2z" fill="none" stroke="#444746" stroke-width="2" stroke-linejoin="round"/><path d="M9 12.5h8M13.5 9l3.5 3.5-3.5 3.5" fill="none" stroke="#444746" stroke-width="1.9"/></svg><svg class="a" style="left:1188px;top:20px" width="29" height="22" viewBox="0 0 29 22"><path d="M7.5 19.5H22a5.5 5.5 0 0 0 .8-10.9A8 8 0 0 0 7.6 6.5 6.5 6.5 0 0 0 7.5 19.5z" fill="none" stroke="#444746" stroke-width="2"/><path d="M10.5 12.5l3 3 5.5-5.5" fill="none" stroke="#444746" stroke-width="2"/></svg><div class="a pre s" style="left:1010.5px;top:53.8px;font-size:20.9px;line-height:24px;color:#1f1f1f">File</div><div class="a pre s" style="left:1067.2px;top:53.8px;font-size:20.9px;line-height:24px;color:#1f1f1f">Edit</div><div class="a pre s" style="left:1126.9px;top:53.8px;font-size:20.9px;line-height:24px;color:#1f1f1f">View</div><div class="a pre s" style="left:1194.4px;top:53.8px;font-size:20.9px;line-height:24px;color:#1f1f1f">Insert</div><div class="a pre s" style="left:1272.9px;top:53.8px;font-size:20.9px;line-height:24px;color:#1f1f1f">Format</div><div class="a pre s" style="left:1363.4px;top:53.8px;font-size:20.9px;line-height:24px;color:#1f1f1f">Tools</div><div class="a pre s" style="left:1436.2px;top:53.8px;font-size:20.9px;line-height:24px;color:#1f1f1f">Extensions</div><div class="a pre s" style="left:1550px;top:53.8px;font-size:21px;line-height:24px;color:#1f1f1f;letter-spacing:-1px">...</div><svg class="a" style="left:1650px;top:26px" width="34" height="32" viewBox="0 0 34 32"><path d="M5.8 17A12 12 0 1 0 8.6 8.2" fill="none" stroke="#444746" stroke-width="2.8"/><path d="M2.5 3.5L11.5 5L5 12z" fill="#444746"/><path d="M17.5 9.5v7l5 4" fill="none" stroke="#444746" stroke-width="2.6"/></svg><svg class="a" style="left:1724px;top:27px" width="31" height="31" viewBox="0 0 31 31"><path d="M2 2h26.5v28L23 24.5H2z" fill="none" stroke="#444746" stroke-width="2.8" stroke-linejoin="round"/><path d="M6.5 8h17.5M6.5 12.5h17.5M6.5 17h17.5" stroke="#444746" stroke-width="2.5"/></svg><svg class="a" style="left:1802px;top:30px" width="33" height="26" viewBox="0 0 33 26"><path d="M8 2H21.5a2 2 0 0 1 2 2V22a2 2 0 0 1-2 2H4a2 2 0 0 1-2-2V8z" fill="none" stroke="#444746" stroke-width="2.6" stroke-linejoin="round"/><path d="M23.5 10.5L31 4v18l-7.5-6.5z" fill="#444746"/></svg><svg class="a" style="left:1847px;top:38px" width="12" height="7" viewBox="0 0 12 7"><path d="M0 0h12L6 6.5z" fill="#444746"/></svg><div class="a" style="left:1893px;top:14px;width:58px;height:58px;border-radius:50%;background:#c2e7ff"></div><svg class="a" style="left:1908px;top:31px" width="14" height="22" viewBox="0 0 14 22"><circle cx="12" cy="6.5" r="4.5" fill="none" stroke="#1f1f1f" stroke-width="2.4"/><path d="M2 20v-2.5c0-3 6-4.5 10-4.5" fill="none" stroke="#1f1f1f" stroke-width="2.4"/></svg><div class="a" style="left:944px;top:92.5px;width:1010px;height:58.5px;border-radius:29px;background:#edf2fa"></div><svg class="a" style="left:971px;top:111px" width="24" height="24" viewBox="0 0 24 24"><circle cx="9.5" cy="9.5" r="6.5" fill="none" stroke="#444746" stroke-width="2.2"/><path d="M14.5 14.5l7 7" stroke="#444746" stroke-width="2.4"/></svg><svg class="a" style="left:1020px;top:112px" width="24" height="24" viewBox="0 0 24 24"><path d="M7 20h7a6 6 0 0 0 0-12H4" fill="none" stroke="#444746" stroke-width="2.2"/><path d="M8 3.5L3.5 8 8 12.5" fill="none" stroke="#444746" stroke-width="2.2"/></svg><svg class="a" style="left:1067px;top:112px" width="24" height="24" viewBox="0 0 24 24"><path d="M17 20h-7a6 6 0 0 1 0-12h10" fill="none" stroke="#444746" stroke-width="2.2"/><path d="M16 3.5L20.5 8 16 12.5" fill="none" stroke="#444746" stroke-width="2.2"/></svg><svg class="a" style="left:1113px;top:111px" width="26" height="24" viewBox="0 0 26 24"><path d="M6 7V2h14v5" fill="none" stroke="#444746" stroke-width="2.2"/><path d="M6 17H2V8.5h22V17h-4" fill="none" stroke="#444746" stroke-width="2.2" stroke-linejoin="round"/><rect x="6.5" y="14" width="13" height="8" fill="none" stroke="#444746" stroke-width="2.2"/><circle cx="20" cy="11" r="1" fill="#444746"/></svg><svg class="a" style="left:1160px;top:111px" width="26" height="26" viewBox="0 0 26 26"><path d="M2 15L7 2h1.5l5 13M4.5 10.5h6.5" fill="none" stroke="#444746" stroke-width="2"/><path d="M10 15.5l4 4L21.5 12" fill="none" stroke="#444746" stroke-width="2.2"/></svg><svg class="a" style="left:1206px;top:110px" width="24" height="28" viewBox="0 0 24 28"><rect x="6" y="2" width="15" height="7" rx="1.5" fill="none" stroke="#444746" stroke-width="2.2"/><path d="M6 5.5H2.5v7.5h10v5" fill="none" stroke="#444746" stroke-width="2.2"/><rect x="10" y="18" width="5" height="8" rx="1" fill="none" stroke="#444746" stroke-width="2.2"/></svg><div class="a pre s" style="left:1254px;top:112px;font-size:21.4px;line-height:24px;color:#444746">100%</div><svg class="a" style="left:1327px;top:119px" width="12" height="7" viewBox="0 0 12 7"><path d="M0 0h12L6 6z" fill="#444746"/></svg><div class="a" style="left:1358.5px;top:108px;width:1.5px;height:28.5px;background:#c7c7c7"></div><div class="a pre s" style="left:1381.5px;top:109.5px;font-size:21.9px;line-height:24px;color:#444746">Normal text</div><svg class="a" style="left:1515px;top:119px" width="12" height="7" viewBox="0 0 12 7"><path d="M0 0h12L6 6z" fill="#444746"/></svg><div class="a" style="left:1549px;top:108px;width:1.5px;height:28.5px;background:#c7c7c7"></div><svg class="a" style="left:1574px;top:114px" width="10" height="20" viewBox="0 0 10 20"><circle cx="5" cy="3.5" r="2.3" fill="#444746"/><circle cx="5" cy="10" r="2.3" fill="#444746"/><circle cx="5" cy="16.5" r="2.3" fill="#444746"/></svg><svg class="a" style="left:1796px;top:109px" width="24" height="26" viewBox="0 0 24 26"><path d="M3 23L3.6 18.2L16.8 5L21 9.2L7.8 22.4z" fill="none" stroke="#444746" stroke-width="2.2" stroke-linejoin="round"/><path d="M15 6.8L18 3.8a1.5 1.5 0 0 1 2.1 0l2.1 2.1a1.5 1.5 0 0 1 0 2.1L19.2 11z" fill="#444746"/></svg><svg class="a" style="left:1833px;top:118px" width="12" height="7" viewBox="0 0 12 7"><path d="M0 0h12L6 6z" fill="#444746"/></svg><div class="a" style="left:1882px;top:108px;width:1.5px;height:29px;background:#c7c7c7"></div><svg class="a" style="left:1904px;top:118px" width="16" height="10" viewBox="0 0 16 10"><path d="M1.5 8.5L8 2l6.5 6.5" fill="none" stroke="#444746" stroke-width="2.2"/></svg><div class="a" style="left:1045px;top:186px;width:875px;height:955px;background:#ffffff"></div><div class="a" style="left:943px;top:185px;width:977px;height:1px;background:#747775"></div><div class="a" style="left:1044.5px;top:186px;width:1px;height:955px;background:#c6c6c6"></div><div class="a" style="left:1044.0px;top:179px;width:1px;height:6px;background:#5f6368"></div><div class="a" style="left:1061.5px;top:179px;width:1px;height:6px;background:#5f6368"></div><div class="a" style="left:1078.9px;top:179px;width:1px;height:6px;background:#5f6368"></div><div class="a" style="left:1096.4px;top:179px;width:1px;height:6px;background:#5f6368"></div><div class="a" style="left:1113.9px;top:173px;width:1px;height:12px;background:#5f6368"></div><div class="a" style="left:1131.3px;top:179px;width:1px;height:6px;background:#5f6368"></div><div class="a" style="left:1148.8px;top:179px;width:1px;height:6px;background:#5f6368"></div><div class="a" style="left:1166.2px;top:179px;width:1px;height:6px;background:#5f6368"></div><div class="a" style="left:1183.7px;top:179px;width:1px;height:6px;background:#5f6368"></div><div class="a" style="left:1201.2px;top:179px;width:1px;height:6px;background:#5f6368"></div><div class="a" style="left:1218.6px;top:179px;width:1px;height:6px;background:#5f6368"></div><div class="a" style="left:1236.1px;top:179px;width:1px;height:6px;background:#5f6368"></div><div class="a" style="left:1253.5px;top:173px;width:1px;height:12px;background:#5f6368"></div><div class="a" style="left:1271.0px;top:179px;width:1px;height:6px;background:#5f6368"></div><div class="a" style="left:1288.5px;top:179px;width:1px;height:6px;background:#5f6368"></div><div class="a" style="left:1305.9px;top:179px;width:1px;height:6px;background:#5f6368"></div><div class="a" style="left:1323.4px;top:179px;width:1px;height:6px;background:#5f6368"></div><div class="a" style="left:1340.8px;top:179px;width:1px;height:6px;background:#5f6368"></div><div class="a" style="left:1358.3px;top:179px;width:1px;height:6px;background:#5f6368"></div><div class="a" style="left:1375.8px;top:179px;width:1px;height:6px;background:#5f6368"></div><div class="a" style="left:1393.2px;top:173px;width:1px;height:12px;background:#5f6368"></div><div class="a" style="left:1410.7px;top:179px;width:1px;height:6px;background:#5f6368"></div><div class="a" style="left:1428.1px;top:179px;width:1px;height:6px;background:#5f6368"></div><div class="a" style="left:1445.6px;top:179px;width:1px;height:6px;background:#5f6368"></div><div class="a" style="left:1463.1px;top:179px;width:1px;height:6px;background:#5f6368"></div><div class="a" style="left:1480.5px;top:179px;width:1px;height:6px;background:#5f6368"></div><div class="a" style="left:1498.0px;top:179px;width:1px;height:6px;background:#5f6368"></div><div class="a" style="left:1515.4px;top:179px;width:1px;height:6px;background:#5f6368"></div><div class="a" style="left:1532.9px;top:173px;width:1px;height:12px;background:#5f6368"></div><div class="a" style="left:1550.4px;top:179px;width:1px;height:6px;background:#5f6368"></div><div class="a" style="left:1567.8px;top:179px;width:1px;height:6px;background:#5f6368"></div><div class="a" style="left:1585.3px;top:179px;width:1px;height:6px;background:#5f6368"></div><div class="a" style="left:1602.7px;top:179px;width:1px;height:6px;background:#5f6368"></div><div class="a" style="left:1620.2px;top:179px;width:1px;height:6px;background:#5f6368"></div><div class="a" style="left:1637.7px;top:179px;width:1px;height:6px;background:#5f6368"></div><div class="a" style="left:1655.1px;top:179px;width:1px;height:6px;background:#5f6368"></div><div class="a" style="left:1672.6px;top:173px;width:1px;height:12px;background:#5f6368"></div><div class="a" style="left:1690.0px;top:179px;width:1px;height:6px;background:#5f6368"></div><div class="a" style="left:1707.5px;top:179px;width:1px;height:6px;background:#5f6368"></div><div class="a" style="left:1725.0px;top:179px;width:1px;height:6px;background:#5f6368"></div><div class="a" style="left:1742.4px;top:179px;width:1px;height:6px;background:#5f6368"></div><div class="a" style="left:1759.9px;top:179px;width:1px;height:6px;background:#5f6368"></div><div class="a" style="left:1777.3px;top:179px;width:1px;height:6px;background:#5f6368"></div><div class="a" style="left:1794.8px;top:179px;width:1px;height:6px;background:#5f6368"></div><div class="a" style="left:1812.3px;top:173px;width:1px;height:12px;background:#5f6368"></div><div class="a" style="left:1829.7px;top:179px;width:1px;height:6px;background:#5f6368"></div><div class="a" style="left:1847.2px;top:179px;width:1px;height:6px;background:#5f6368"></div><div class="a" style="left:1864.6px;top:179px;width:1px;height:6px;background:#5f6368"></div><div class="a" style="left:1882.1px;top:179px;width:1px;height:6px;background:#5f6368"></div><div class="a" style="left:1899.6px;top:179px;width:1px;height:6px;background:#5f6368"></div><div class="a" style="left:1917.0px;top:179px;width:1px;height:6px;background:#5f6368"></div><div class="a pre s" style="left:1034.7px;top:161px;width:20px;text-align:center;font-size:16.5px;line-height:18px;color:#444746">1</div><div class="a pre s" style="left:1313.5px;top:161px;width:20px;text-align:center;font-size:16.5px;line-height:18px;color:#444746">1</div><div class="a pre s" style="left:1453.3px;top:161px;width:20px;text-align:center;font-size:16.5px;line-height:18px;color:#444746">2</div><div class="a pre s" style="left:1593.0px;top:161px;width:20px;text-align:center;font-size:16.5px;line-height:18px;color:#444746">3</div><div class="a pre s" style="left:1732.8px;top:161px;width:20px;text-align:center;font-size:16.5px;line-height:18px;color:#444746">4</div><div class="a pre s" style="left:1872.5px;top:161px;width:20px;text-align:center;font-size:16.5px;line-height:18px;color:#444746">5</div><svg class="a" style="left:1175px;top:165.5px" width="19" height="17" viewBox="0 0 19 17"><rect x="0" y="0" width="18" height="6" fill="#2b7de9"/><path d="M0 7.5h18L9 16.5z" fill="#2b7de9"/></svg><div class="a" style="left:1224px;top:185px;width:5px;height:3px;border-radius:0 0 3px 3px;background:#5f6368"></div><div class="a" style="left:943px;top:185px;width:1px;height:956px;background:#747775"></div><div class="a" style="left:937px;top:187.8px;width:6px;height:1px;background:#5f6368"></div><div class="a" style="left:937px;top:205.3px;width:6px;height:1px;background:#5f6368"></div><div class="a" style="left:937px;top:222.7px;width:6px;height:1px;background:#5f6368"></div><div class="a" style="left:937px;top:240.2px;width:6px;height:1px;background:#5f6368"></div><div class="a" style="left:930px;top:257.6px;width:13px;height:1px;background:#5f6368"></div><div class="a" style="left:937px;top:275.1px;width:6px;height:1px;background:#5f6368"></div><div class="a" style="left:937px;top:292.6px;width:6px;height:1px;background:#5f6368"></div><div class="a" style="left:937px;top:310.0px;width:6px;height:1px;background:#5f6368"></div><div class="a" style="left:937px;top:327.5px;width:6px;height:1px;background:#5f6368"></div><div class="a" style="left:937px;top:344.9px;width:6px;height:1px;background:#5f6368"></div><div class="a" style="left:937px;top:362.4px;width:6px;height:1px;background:#5f6368"></div><div class="a" style="left:937px;top:379.9px;width:6px;height:1px;background:#5f6368"></div><div class="a" style="left:930px;top:397.3px;width:13px;height:1px;background:#5f6368"></div><div class="a" style="left:937px;top:414.8px;width:6px;height:1px;background:#5f6368"></div><div class="a" style="left:937px;top:432.2px;width:6px;height:1px;background:#5f6368"></div><div class="a" style="left:937px;top:449.7px;width:6px;height:1px;background:#5f6368"></div><div class="a" style="left:937px;top:467.2px;width:6px;height:1px;background:#5f6368"></div><div class="a" style="left:937px;top:484.6px;width:6px;height:1px;background:#5f6368"></div><div class="a" style="left:937px;top:502.1px;width:6px;height:1px;background:#5f6368"></div><div class="a" style="left:937px;top:519.5px;width:6px;height:1px;background:#5f6368"></div><div class="a" style="left:930px;top:537.0px;width:13px;height:1px;background:#5f6368"></div><div class="a" style="left:937px;top:554.5px;width:6px;height:1px;background:#5f6368"></div><div class="a" style="left:937px;top:571.9px;width:6px;height:1px;background:#5f6368"></div><div class="a" style="left:937px;top:589.4px;width:6px;height:1px;background:#5f6368"></div><div class="a" style="left:937px;top:606.8px;width:6px;height:1px;background:#5f6368"></div><div class="a" style="left:937px;top:624.3px;width:6px;height:1px;background:#5f6368"></div><div class="a" style="left:937px;top:641.8px;width:6px;height:1px;background:#5f6368"></div><div class="a" style="left:937px;top:659.2px;width:6px;height:1px;background:#5f6368"></div><div class="a" style="left:930px;top:676.7px;width:13px;height:1px;background:#5f6368"></div><div class="a" style="left:937px;top:694.1px;width:6px;height:1px;background:#5f6368"></div><div class="a" style="left:937px;top:711.6px;width:6px;height:1px;background:#5f6368"></div><div class="a" style="left:937px;top:729.1px;width:6px;height:1px;background:#5f6368"></div><div class="a" style="left:937px;top:746.5px;width:6px;height:1px;background:#5f6368"></div><div class="a" style="left:937px;top:764.0px;width:6px;height:1px;background:#5f6368"></div><div class="a" style="left:937px;top:781.4px;width:6px;height:1px;background:#5f6368"></div><div class="a" style="left:937px;top:798.9px;width:6px;height:1px;background:#5f6368"></div><div class="a" style="left:930px;top:816.4px;width:13px;height:1px;background:#5f6368"></div><div class="a" style="left:937px;top:833.8px;width:6px;height:1px;background:#5f6368"></div><div class="a" style="left:937px;top:851.3px;width:6px;height:1px;background:#5f6368"></div><div class="a" style="left:937px;top:868.7px;width:6px;height:1px;background:#5f6368"></div><div class="a" style="left:937px;top:886.2px;width:6px;height:1px;background:#5f6368"></div><div class="a" style="left:937px;top:903.7px;width:6px;height:1px;background:#5f6368"></div><div class="a" style="left:937px;top:921.1px;width:6px;height:1px;background:#5f6368"></div><div class="a" style="left:937px;top:938.6px;width:6px;height:1px;background:#5f6368"></div><div class="a" style="left:930px;top:956.0px;width:13px;height:1px;background:#5f6368"></div><div class="a" style="left:937px;top:973.5px;width:6px;height:1px;background:#5f6368"></div><div class="a" style="left:937px;top:991.0px;width:6px;height:1px;background:#5f6368"></div><div class="a" style="left:937px;top:1008.4px;width:6px;height:1px;background:#5f6368"></div><div class="a" style="left:937px;top:1025.9px;width:6px;height:1px;background:#5f6368"></div><div class="a" style="left:937px;top:1043.3px;width:6px;height:1px;background:#5f6368"></div><div class="a" style="left:937px;top:1060.8px;width:6px;height:1px;background:#5f6368"></div><div class="a" style="left:937px;top:1078.3px;width:6px;height:1px;background:#5f6368"></div><div class="a" style="left:930px;top:1095.7px;width:13px;height:1px;background:#5f6368"></div><div class="a" style="left:937px;top:1113.2px;width:6px;height:1px;background:#5f6368"></div><div class="a" style="left:937px;top:1130.6px;width:6px;height:1px;background:#5f6368"></div><div class="a pre s" style="left:918px;top:179.3px;width:20px;height:18px;text-align:center;font-size:16.5px;line-height:18px;color:#444746;transform:rotate(-90deg)">1</div><div class="a pre s" style="left:918px;top:319.0px;width:20px;height:18px;text-align:center;font-size:16.5px;line-height:18px;color:#444746;transform:rotate(-90deg)">2</div><div class="a pre s" style="left:918px;top:458.7px;width:20px;height:18px;text-align:center;font-size:16.5px;line-height:18px;color:#444746;transform:rotate(-90deg)">3</div><div class="a pre s" style="left:918px;top:598.4px;width:20px;height:18px;text-align:center;font-size:16.5px;line-height:18px;color:#444746;transform:rotate(-90deg)">4</div><div class="a pre s" style="left:918px;top:738.1px;width:20px;height:18px;text-align:center;font-size:16.5px;line-height:18px;color:#444746;transform:rotate(-90deg)">5</div><div class="a pre s" style="left:918px;top:877.8px;width:20px;height:18px;text-align:center;font-size:16.5px;line-height:18px;color:#444746;transform:rotate(-90deg)">6</div><div class="a pre s" style="left:918px;top:1017.5px;width:20px;height:18px;text-align:center;font-size:16.5px;line-height:18px;color:#444746;transform:rotate(-90deg)">7</div><svg class="a" style="left:981px;top:222px" width="28" height="24" viewBox="0 0 28 24"><circle cx="2.8" cy="3" r="2" fill="#444746"/><circle cx="2.8" cy="11.5" r="2" fill="#444746"/><circle cx="2.8" cy="20" r="2" fill="#444746"/><path d="M7.5 3H26M7.5 11.5H26M7.5 20H26" stroke="#444746" stroke-width="2.4"/></svg><div class="a" style="left:1918px;top:0;width:2px;height:1141px;background:#5f5f5f"></div><div class="a pre s" style="left:1197.2px;top:218.4px;font-size:21.39px;line-height:28.24px;color:#000">  async fn add_nodes_to_hashmap(
    node: &amp;MerkleNodePtr,
    files: &amp;mut BTreeMap&lt;String, File&gt;,
  ) {
    let node_reader = node.read().await;
    match &amp;node_reader.node_type {
      NodeType::Branch(n) =&gt; {
        let children = &amp;n.1;
        files.insert(n.0.clone(), File { node: node.clone() });
        for child in children {
          add_nodes_to_hashmap(child, files).await;
        }
      }
      NodeType::File(file_name) =&gt; {
        let f = File { node: node.clone() };
        files.insert(file_name.clone(), f);
      }
      NodeType::ErrorNode(_) =&gt; {
        // do nothing
      }
    }
  }

  add_nodes_to_hashmap(&amp;mt.root, &amp;mut mt.files).await;

  tracing::info!(
    "number of files in the tree for rg ignore: {}",
    mt.files.len()
  );

  Ok(mt)
}</div></body></html>
